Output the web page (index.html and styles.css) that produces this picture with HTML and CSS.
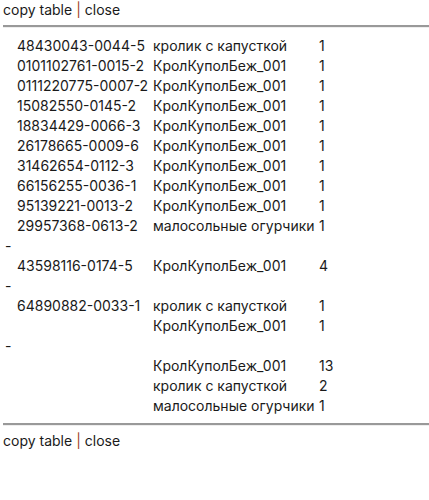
FILE: index.html
```html
<!DOCTYPE html>
<html lang="ru">
  <head>
    <meta charset="UTF-8" />
    <title>Таблица</title>
    <link rel="stylesheet" href="styles.css">
  </head>
  <body>
    <div class="toolbar">
      <a class="link">copy table</a><span class="sep">|</span><a class="link">close</a>
    </div>
    <hr class="line line-top" />
    <table class="report">
      <tbody>
        <tr><td class="code">48430043-0044-5</td><td>кролик с капусткой</td><td>1</td></tr>
        <tr><td class="code">0101102761-0015-2</td><td>КролКуполБеж_001</td><td>1</td></tr>
        <tr><td class="code">0111220775-0007-2</td><td>КролКуполБеж_001</td><td>1</td></tr>
        <tr><td class="code">15082550-0145-2</td><td>КролКуполБеж_001</td><td>1</td></tr>
        <tr><td class="code">18834429-0066-3</td><td>КролКуполБеж_001</td><td>1</td></tr>
        <tr><td class="code">26178665-0009-6</td><td>КролКуполБеж_001</td><td>1</td></tr>
        <tr><td class="code">31462654-0112-3</td><td>КролКуполБеж_001</td><td>1</td></tr>
        <tr><td class="code">66156255-0036-1</td><td>КролКуполБеж_001</td><td>1</td></tr>
        <tr><td class="code">95139221-0013-2</td><td>КролКуполБеж_001</td><td>1</td></tr>
        <tr><td class="code">29957368-0613-2</td><td>малосольные огурчики</td><td>1</td></tr>
        <tr><td class="dash" colspan="3">-</td></tr>
        <tr><td class="code">43598116-0174-5</td><td>КролКуполБеж_001</td><td>4</td></tr>
        <tr><td class="dash" colspan="3">-</td></tr>
        <tr><td class="code">64890882-0033-1</td><td>кролик с капусткой</td><td>1</td></tr>
        <tr><td class="code"></td><td>КролКуполБеж_001</td><td>1</td></tr>
        <tr><td class="dash" colspan="3">-</td></tr>
        <tr><td class="code"></td><td>КролКуполБеж_001</td><td>13</td></tr>
        <tr><td class="code"></td><td>кролик с капусткой</td><td>2</td></tr>
        <tr><td class="code"></td><td>малосольные огурчики</td><td>1</td></tr>
      </tbody>
    </table>
    <hr class="line line-bottom" />
    <div class="toolbar">
      <a class="link">copy table</a><span class="sep">|</span><a class="link">close</a>
    </div>
  </body>
</html>
```
FILE: styles.css
```css
* {
  margin: 0;
  padding: 0;
  box-sizing: border-box;
  font-family: "Inter", "Noto Sans", sans-serif;
}
body {
  background-color: white;
  color: #1a1a1a;
  font-size: 14px;
}
.toolbar {
  height: 20px;
  line-height: 20px;
  padding-left: 3px;
}
.link {
  cursor: pointer;
}
.sep {
  color: #a0402a;
  margin: 0 4px;
}
.line {
  border: none;
  border-top: 2px solid #999;
  border-bottom: 1px solid #eee;
  margin-left: 3px;
}
.line-top {
  margin-top: 5px;
  margin-bottom: 7px;
}
.line-bottom {
  margin-top: 8px;
  margin-bottom: 5px;
}
.report {
  border-collapse: collapse;
  margin-left: 5px;
}
.report td {
  height: 20px;
  padding: 0;
  white-space: nowrap;
  vertical-align: middle;
}
.report td.code {
  width: 148px;
  padding-left: 12px;
}
.report td:nth-child(2) {
  width: 166px;
}
.report td.dash {
  padding-left: 0;
}
```
